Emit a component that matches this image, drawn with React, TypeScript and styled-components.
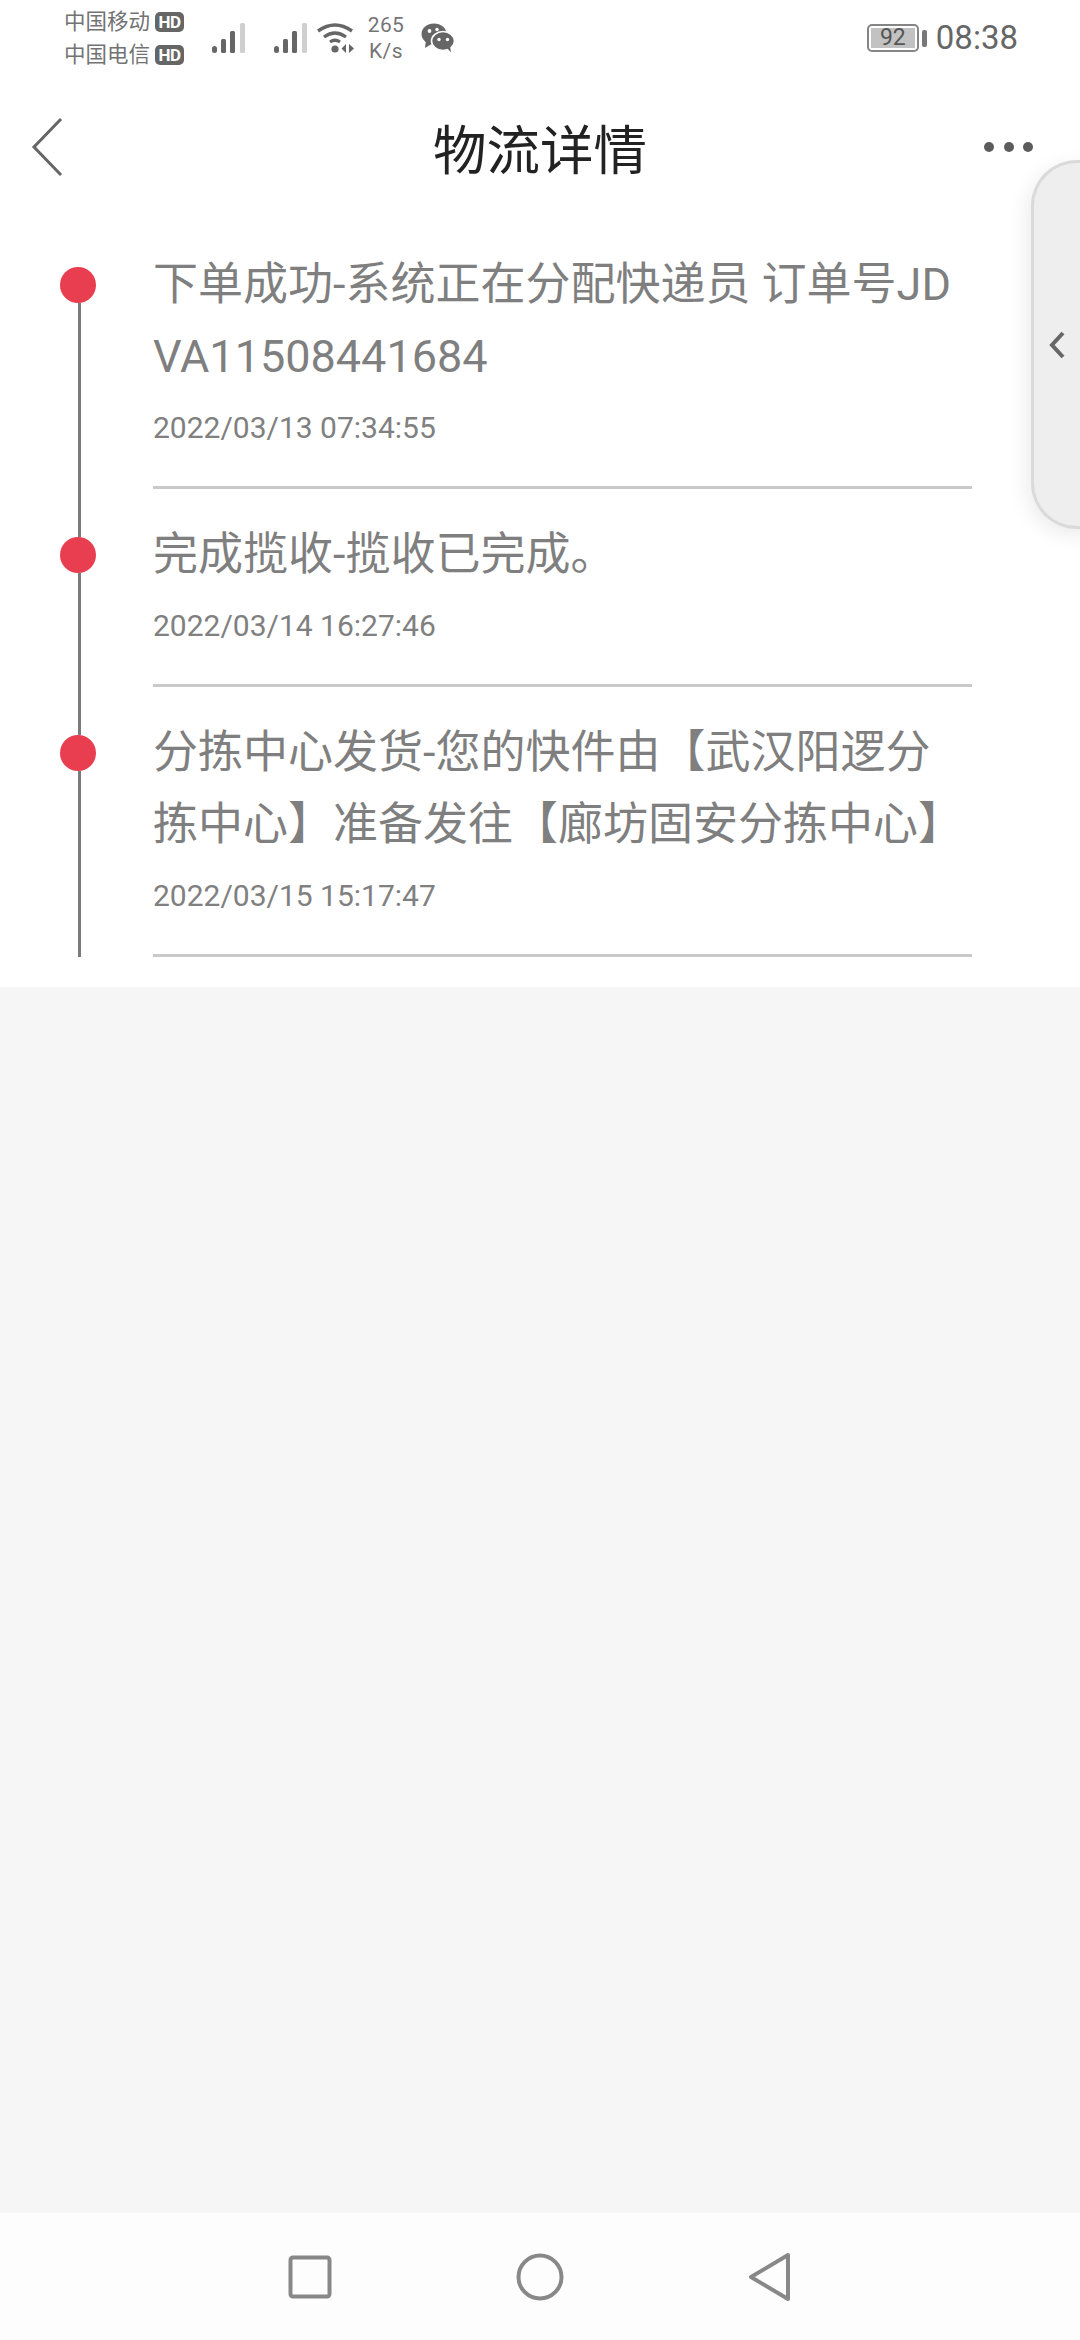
import React from "react";
import styled, { createGlobalStyle } from "styled-components";

const Global = createGlobalStyle`
  html, body { margin: 0; padding: 0; background: #f6f6f6; }
  * { box-sizing: border-box; }
  body { font-family: Roboto, "Noto Sans CJK SC", sans-serif; }
`;

const Page = styled.div`
  width: 1080px;
  height: 2340px;
  display: flex;
  flex-direction: column;
  position: relative;
  overflow: hidden;
  background: #f6f6f6;
`;

const Top = styled.div`
  background: #fff;
  padding-bottom: 30px;
`;

const StatusBar = styled.div`
  height: 76px;
  display: flex;
  align-items: center;
  padding: 0 62px 0 64px;
  color: #666;
`;

const Carriers = styled.div`
  display: flex;
  flex-direction: column;
  gap: 5px;
  width: 148px;
  font-size: 21.5px;
  line-height: 28px;
  color: #737373;
`;

const Carrier = styled.div`
  display: flex;
  align-items: center;
  gap: 5px;
`;

const HdBadge = styled.span`
  width: 29px;
  height: 20px;
  border-radius: 5px;
  background: #666;
  color: #fff;
  font-size: 17px;
  font-weight: 700;
  line-height: 20px;
  text-align: center;
  letter-spacing: -0.5px;
`;

const Speed = styled.div`
  width: 40px;
  margin-left: 11px;
  text-align: center;
  font-size: 21px;
  line-height: 26px;
  color: #757575;
  letter-spacing: 0.4px;
`;

const StatusIcon = styled.svg<{ $gap?: number }>`
  display: block;
  flex: none;
  margin-left: ${(p) => p.$gap ?? 0}px;
`;

const Spacer = styled.div`
  flex: 1;
`;

const Battery = styled.div`
  width: 52px;
  height: 28px;
  border: 2px solid #858585;
  border-radius: 5px;
  padding: 2px;
  display: flex;
`;

const BatteryFill = styled.div`
  flex: 1;
  background: #c2c2c2;
  color: #555;
  font-size: 23px;
  line-height: 20px;
  text-align: center;
`;

const BatteryNub = styled.div`
  width: 5px;
  height: 17px;
  margin: 0 9px 0 3px;
  border-radius: 2px;
  background: #777;
`;

const Clock = styled.div`
  font-size: 33px;
  color: #666;
  line-height: 40px;
`;

const Header = styled.div`
  height: 143px;
  display: grid;
  grid-template-columns: 1fr auto 1fr;
  align-items: center;
  padding: 0 47px 2px;
`;

const Title = styled.h1`
  margin: 0;
  font-size: 53.5px;
  line-height: 70px;
  font-weight: 400;
  color: #222;
  font-family: "Noto Sans CJK SC", sans-serif;
`;

const BackIcon = styled.svg`
  display: block;
  margin-left: -16px;
`;

const More = styled.div`
  justify-self: end;
  display: flex;
  gap: 9.5px;
`;

const MoreDot = styled.span`
  width: 10px;
  height: 10px;
  border-radius: 50%;
  background: #5c5c5c;
`;

const Row = styled.div`
  display: flex;
  padding-left: 60px;
`;

const Rail = styled.div`
  width: 36px;
  margin-right: 57px;
  display: flex;
  flex-direction: column;
  align-items: center;
  flex: none;
`;

const RailLine = styled.div<{ $hidden?: boolean; $grow?: boolean }>`
  width: 3px;
  margin-left: 2px;
  background: ${(p) => (p.$hidden ? "transparent" : "#7b7b7b")};
  height: ${(p) => (p.$grow ? "auto" : "48px")};
  flex: ${(p) => (p.$grow ? 1 : "none")};
`;

const Dot = styled.div`
  width: 36px;
  height: 36px;
  border-radius: 50%;
  background: #e93d50;
  flex: none;
`;

const Body = styled.div`
  width: 819px;
  padding-top: 30px;
  border-bottom: 3px solid #c9c9c9;
`;

const Message = styled.div`
  font-size: 45px;
  line-height: 72px;
  color: #7f7f7f;
  word-break: break-all;
`;

const Time = styled.div`
  margin-top: 15px;
  padding-bottom: 38px;
  font-size: 30px;
  line-height: 40px;
  color: #808080;
`;

const SidePanel = styled.div`
  position: absolute;
  left: 1031px;
  top: 160px;
  width: 90px;
  height: 369px;
  border-radius: 46px 0 0 46px;
  background: #eeeeee;
  border: 3px solid #dadada;
  border-right: none;
  box-shadow: -4px 6px 20px rgba(0, 0, 0, 0.08);
  display: flex;
  align-items: center;
  padding-left: 14px;
`;

const Main = styled.div`
  flex: 1;
`;

const NavBar = styled.div`
  height: 127px;
  background: #fdfdfd;
  display: grid;
  grid-template-columns: repeat(3, 230px);
  justify-content: center;
  justify-items: center;
  align-items: center;
`;

const Bars = ({ gap }: { gap?: number }) => (
  <StatusIcon $gap={gap} width="34" height="32" viewBox="0 0 34 32">
    <rect x="0" y="24" width="5" height="7" rx="2.5" fill="#666" />
    <rect x="9" y="17" width="5" height="14" rx="1.5" fill="#666" />
    <rect x="18" y="9" width="5" height="22" rx="1.5" fill="#666" />
    <rect x="28" y="1" width="5" height="30" rx="1.5" fill="#cfcfcf" />
  </StatusIcon>
);

const Wifi = () => (
  <StatusIcon $gap={9} width="38" height="32" viewBox="0 0 38 32">
    <path d="M1 9 Q18 -3 35 9" fill="none" stroke="#666" strokeWidth="3.4" />
    <path d="M7 15 Q18 7 29 15" fill="none" stroke="#666" strokeWidth="3.4" />
    <path d="M13 20 Q18 16.5 23 20" fill="none" stroke="#666" strokeWidth="3.2" />
    <circle cx="18" cy="27" r="3.6" fill="#666" />
    <path d="M29 22 V31 L24.5 26.5 Z M32 22 V31 L37 26.5 Z" fill="#666" />
  </StatusIcon>
);

const WeChat = () => (
  <StatusIcon $gap={15} width="33" height="30" viewBox="0 0 33 30">
    <ellipse cx="13" cy="11" rx="12.5" ry="10.5" fill="#666" />
    <path d="M5 17 L4 25 L12 20 Z" fill="#666" />
    <ellipse cx="22" cy="18" rx="11.5" ry="9.5" fill="#666" stroke="#fff" strokeWidth="1.6" />
    <path d="M26 25 L30 29.5 L29 23 Z" fill="#666" />
    <circle cx="8.5" cy="8" r="1.9" fill="#fff" />
    <circle cx="16" cy="6.5" r="1.7" fill="#fff" />
    <circle cx="18" cy="16.5" r="1.7" fill="#fff" />
    <circle cx="26.5" cy="16.5" r="1.7" fill="#fff" />
  </StatusIcon>
);

const steps = [
  { text: "下单成功-系统正在分配快递员 订单号JDVA11508441684", time: "2022/03/13 07:34:55" },
  { text: "完成揽收-揽收已完成。", time: "2022/03/14 16:27:46" },
  { text: "分拣中心发货-您的快件由【武汉阳逻分拣中心】准备发往【廊坊固安分拣中心】", time: "2022/03/15 15:17:47" },
];

export default function App() {
  return (
    <Page>
      <Global />
      <Top>
        <StatusBar>
          <Carriers>
            <Carrier>中国移动<HdBadge>HD</HdBadge></Carrier>
            <Carrier>中国电信<HdBadge>HD</HdBadge></Carrier>
          </Carriers>
          <Bars />
          <Bars gap={28} />
          <Wifi />
          <Speed>265<br />K/s</Speed>
          <WeChat />
          <Spacer />
          <Battery><BatteryFill>92</BatteryFill></Battery>
          <BatteryNub />
          <Clock>08:38</Clock>
        </StatusBar>
        <Header>
          <BackIcon width="32" height="60" viewBox="0 0 32 60">
            <path d="M30 2 L3 30 L30 58" fill="none" stroke="#666" strokeWidth="3" />
          </BackIcon>
          <Title>物流详情</Title>
          <More><MoreDot /><MoreDot /><MoreDot /></More>
        </Header>
        {steps.map((s, i) => (
          <Row key={s.time}>
            <Rail>
              <RailLine $hidden={i === 0} />
              <Dot />
              <RailLine $grow />
            </Rail>
            <Body>
              <Message>{s.text}</Message>
              <Time>{s.time}</Time>
            </Body>
          </Row>
        ))}
      </Top>
      <Main />
      <NavBar>
        <svg width="44" height="44" viewBox="0 0 44 44">
          <rect x="2.5" y="2.5" width="39" height="39" rx="2.5" fill="none" stroke="#888" strokeWidth="4" />
        </svg>
        <svg width="48" height="48" viewBox="0 0 48 48">
          <circle cx="24" cy="24" r="21.5" fill="none" stroke="#888" strokeWidth="4" />
        </svg>
        <svg width="44" height="50" viewBox="0 0 44 50">
          <path d="M40 3 L3 25 L40 47 Z" fill="none" stroke="#888" strokeWidth="4" strokeLinejoin="round" />
        </svg>
      </NavBar>
      <SidePanel>
        <svg width="18" height="30" viewBox="0 0 18 30">
          <path d="M15 3 L4 15 L15 27" fill="none" stroke="#666" strokeWidth="4" />
        </svg>
      </SidePanel>
    </Page>
  );
}
